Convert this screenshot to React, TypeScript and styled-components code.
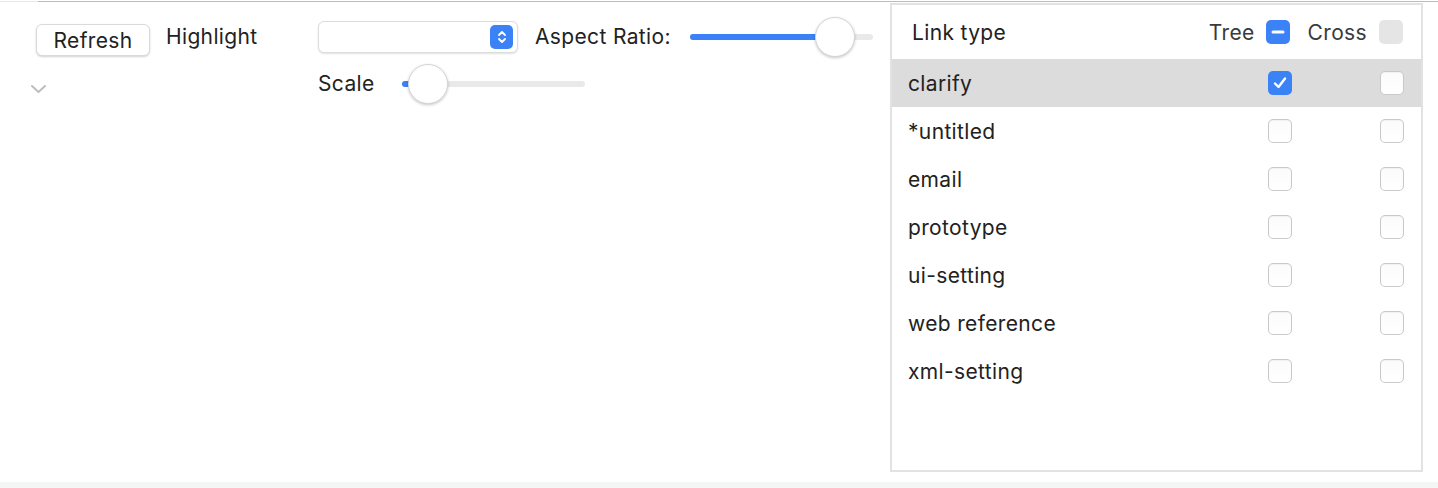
import React from 'react';
import styled, { createGlobalStyle } from 'styled-components';

const GlobalStyle = createGlobalStyle`
  html, body {
    margin: 0;
    padding: 0;
    background: #ffffff;
  }
  body {
    font-family: Inter, "Noto Sans", "Liberation Sans", sans-serif;
    color: #222222;
    letter-spacing: 0.35px;
  }
`;

const Page = styled.div`
  width: 1438px;
  height: 488px;
  display: flex;
  flex-direction: column;
  overflow: hidden;
`;

const TopRule = styled.div`
  height: 1px;
  margin: 1px 0 1px;
  background: linear-gradient(to right, #e8e8e8 0, #e8e8e8 38px, #bcbcbc 38px);
`;

const Main = styled.div`
  display: flex;
  height: 469px;
`;

const Controls = styled.div`
  flex: 1;
  display: grid;
  grid-template-columns: 166px 152px 217px 155px 183px;
  grid-template-rows: 40px 54px;
  align-content: start;
  padding-top: 14px;
`;

const Cell = styled.div<{ $span?: string; $pad?: number }>`
  display: flex;
  align-items: center;
  grid-column: ${p => p.$span || 'auto'};
  padding-left: ${p => p.$pad || 0}px;
`;

const Button = styled.button`
  width: 114px;
  height: 32px;
  margin-top: 6px;
  border: 1px solid #dadada;
  border-radius: 6px;
  background: #fff;
  box-shadow: 0 1px 2px rgba(0, 0, 0, 0.18);
  font: inherit;
  font-size: 21px;
  letter-spacing: 0.35px;
  color: #222;
  padding: 0;
`;

const Label = styled.span<{ $w?: number }>`
  font-size: 21px;
  line-height: 24px;
  width: ${p => (p.$w ? `${p.$w}px` : 'auto')};
  flex-shrink: 0;
`;

const Select = styled.div`
  width: 200px;
  height: 32px;
  box-sizing: border-box;
  border: 1px solid #dcdcdc;
  border-radius: 6px;
  background: #fff;
  box-shadow: 0 1px 2px rgba(0, 0, 0, 0.12);
  display: flex;
  align-items: center;
  justify-content: flex-end;
  padding-right: 4px;
`;

const Stepper = styled.div`
  width: 23px;
  height: 24px;
  border-radius: 5px;
  background: #3b82f7;
  display: flex;
  align-items: center;
  justify-content: center;
`;

const Track = styled.div<{ $w: number }>`
  position: relative;
  width: ${p => p.$w}px;
  height: 6px;
  border-radius: 3px;
  background: #e9e9e9;
`;

const Fill = styled.div`
  height: 100%;
  border-radius: 3px;
  background: #3a80f6;
`;

const Thumb = styled.div`
  position: absolute;
  top: 50%;
  width: 40px;
  height: 40px;
  margin: -20px 0 0 -20px;
  border-radius: 50%;
  background: #fff;
  box-sizing: border-box;
  border: 1px solid #d6d6d6;
  box-shadow: 0 1px 3px rgba(0, 0, 0, 0.22);
`;

const Chevron = styled.svg`
  margin-top: 10px;
`;

const Panel = styled.div`
  width: 533px;
  margin-right: 15px;
  box-sizing: border-box;
  border: 2px solid #e2e2e2;
  display: flex;
  flex-direction: column;
`;

const Header = styled.div`
  height: 54px;
  display: flex;
  align-items: center;
  padding: 0 18px 0 20px;
  font-size: 21px;
`;

const HeaderTitle = styled.span`
  flex: 1;
`;

const HeaderGroup = styled.div<{ $gap: number }>`
  display: flex;
  align-items: center;
  gap: ${p => p.$gap}px;
  color: #3a3a3a;
`;

const Row = styled.div<{ $selected?: boolean }>`
  height: 48px;
  display: grid;
  grid-template-columns: 1fr 24px 24px;
  column-gap: 88px;
  align-items: center;
  padding: 0 17px 0 16px;
  font-size: 21px;
  background: ${p => (p.$selected ? '#dcdcdc' : 'transparent')};
`;

const Box = styled.div<{ $state?: 'on' | 'mixed' | 'off' | 'disabled' }>`
  width: 24px;
  height: 24px;
  box-sizing: border-box;
  border-radius: 5px;
  display: flex;
  align-items: center;
  justify-content: center;
  ${p =>
    p.$state === 'on' || p.$state === 'mixed'
      ? 'background: #3b82f7; border: none;'
      : p.$state === 'disabled'
      ? 'background: #e5e5e5; border: none;'
      : 'background: linear-gradient(#fbfbfb, #ffffff); border: 1px solid #c9c9c9; box-shadow: inset 0 1px 1px rgba(0,0,0,0.04);'}
`;

const BottomStrip = styled.div`
  margin-top: auto;
  height: 6px;
  background: #f4f5f5;
`;

const Slider = ({ width, value }: { width: number; value: number }) => (
  <Track $w={width}>
    <Fill style={{ width: `${value}%` }} />
    <Thumb style={{ left: `${value}%` }} />
  </Track>
);

const Check = ({ state }: { state?: 'on' | 'mixed' | 'off' | 'disabled' }) => (
  <Box $state={state}>
    {state === 'on' && (
      <svg width="16" height="16" viewBox="0 0 16 16">
        <path d="M3 8.5 L6.5 12 L13 3.5" fill="none" stroke="#fff" strokeWidth="2.4" strokeLinecap="round" strokeLinejoin="round" />
      </svg>
    )}
    {state === 'mixed' && (
      <svg width="16" height="16" viewBox="0 0 16 16">
        <line x1="3" y1="8" x2="13" y2="8" stroke="#fff" strokeWidth="3" strokeLinecap="round" />
      </svg>
    )}
  </Box>
);

const linkTypes = ['clarify', '*untitled', 'email', 'prototype', 'ui-setting', 'web reference', 'xml-setting'];

export default function App() {
  return (
    <Page>
      <GlobalStyle />
      <TopRule />
      <Main>
        <Controls>
          <Cell $pad={36}>
            <Button>Refresh</Button>
          </Cell>
          <Cell>
            <Label>Highlight</Label>
          </Cell>
          <Cell>
            <Select>
              <Stepper>
                <svg width="12" height="18" viewBox="0 0 12 18">
                  <path d="M3 7 L6 4 L9 7 M3 11 L6 14 L9 11" fill="none" stroke="#fff" strokeWidth="1.8" strokeLinecap="round" strokeLinejoin="round" />
                </svg>
              </Stepper>
            </Select>
          </Cell>
          <Cell>
            <Label>Aspect Ratio:</Label>
          </Cell>
          <Cell>
            <Slider width={183} value={79} />
          </Cell>

          <Cell $pad={30}>
            <Chevron width="17" height="10" viewBox="0 0 17 10">
              <path d="M2 2 L8.5 8 L15 2" fill="none" stroke="#bdbdbd" strokeWidth="2" strokeLinecap="round" strokeLinejoin="round" />
            </Chevron>
          </Cell>
          <Cell $span="3 / 6">
            <Label $w={84}>Scale</Label>
            <Slider width={183} value={14} />
          </Cell>
        </Controls>
        <Panel>
          <Header>
            <HeaderTitle>Link type</HeaderTitle>
            <HeaderGroup $gap={11}>
              Tree <Check state="mixed" />
            </HeaderGroup>
            <HeaderGroup $gap={12} style={{ marginLeft: 18 }}>
              Cross <Check state="disabled" />
            </HeaderGroup>
          </Header>
          {linkTypes.map((name, i) => (
            <Row key={name} $selected={i === 0}>
              <span>{name}</span>
              <Check state={i === 0 ? 'on' : 'off'} />
              <Check state="off" />
            </Row>
          ))}
        </Panel>
      </Main>
      <BottomStrip />
    </Page>
  );
}
